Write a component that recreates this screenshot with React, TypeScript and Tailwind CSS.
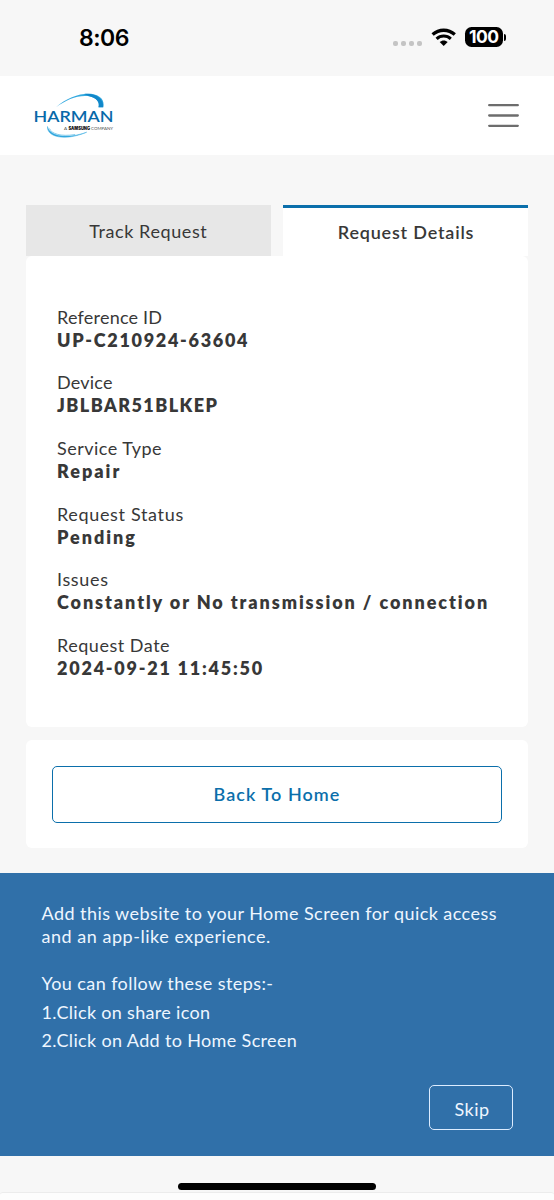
import React from "react";

const details = [
  { label: "Reference ID", value: "UP-C210924-63604", ls: "tracking-[0.22px]", vs: "tracking-[1.7px]" },
  { label: "Device", value: "JBLBAR51BLKEP", ls: "tracking-[0.2px]", vs: "tracking-[1.44px]" },
  { label: "Service Type", value: "Repair", ls: "tracking-[0.48px]", vs: "tracking-[2px]" },
  { label: "Request Status", value: "Pending", ls: "tracking-[0.66px]", vs: "tracking-[1.95px]" },
  { label: "Issues", value: "Constantly or No transmission / connection", ls: "tracking-[0.65px]", vs: "tracking-[1.92px]" },
  { label: "Request Date", value: "2024-09-21 11:45:50", ls: "tracking-[0.52px]", vs: "tracking-[1.77px]" },
];

function StatusBar() {
  return (
    <div className="flex h-[76px] items-start justify-between bg-[#f7f7f7] pl-[79px] pr-[48px] font-['Inter',sans-serif]">
      <span className="mt-[24px] text-[23px] font-semibold leading-[28px] tracking-[-0.5px] text-black">8:06</span>
      <div className="mt-[27px] flex items-start">
        <div className="mt-[14px] flex gap-[3px]">
          <i className="size-[5px] rounded-[2px] bg-[#c4c4c4]" />
          <i className="size-[5px] rounded-[2px] bg-[#c4c4c4]" />
          <i className="size-[5px] rounded-[2px] bg-[#c4c4c4]" />
          <i className="size-[5px] rounded-[2px] bg-[#c4c4c4]" />
        </div>
        <svg className="ml-[9px] mt-[0.5px]" width="26" height="19" viewBox="0 0 26 19" fill="none" stroke="#000">
          <path d="M1.600 6.500C8 .8 17.400 .8 23.800 6.500" strokeWidth="3.300" />
          <path d="M5.600 10.800c4-3.700 10.200-3.700 14.200 0" strokeWidth="3.100" />
          <path d="M8.700 14.100c2.300-2.100 5.700-2.100 8 0L12.700 18.100Z" fill="#000" stroke="none" />
        </svg>
        <div className="ml-[8px] flex items-center">
          <div className="flex h-[20px] w-[37.500px] items-center justify-center rounded-[6.500px] bg-black text-[17.500px] font-bold leading-none tracking-[-0.600px] text-white">
            100
          </div>
          <i className="ml-px h-[7px] w-[2.500px] rounded-r-full bg-black" />
        </div>
      </div>
    </div>
  );
}

function Logo() {
  return (
    <svg width="84" height="50" viewBox="0 0 84 50">
      <path d="M22 16.300C32 6.500 47 1.800 57 2.800C67 4 71 10 69.200 16.300L64.500 16.300C66 11.500 63 7.200 56 5.600C45 3.500 33 8.500 22 16.300Z" fill="#35aae0" />
      <path d="M50 2.900C62 2 70 7.500 69.200 16.300L64.500 16.300C66 11.500 63 7 54 4.800Z" fill="#1187c9" />
      <path d="M13.500 35.500C12.500 46 31 50.500 52.700 41.200C34 47.800 16 46 13.500 35.500Z" fill="#2aa3dc" stroke="#45b0e2" strokeWidth="0.500" />
      <path d="M15.500 37.500C17 42.500 27 46 41 43.500" fill="none" stroke="#6fc3ea" strokeWidth="0.800" />
      <text x="-0.500" y="31.300" textLength="80" lengthAdjust="spacingAndGlyphs" fontFamily="Lato, sans-serif" fontWeight="600" fontSize="16" fill="#0869a9">HARMAN</text>
      <text x="30" y="38.500" fontFamily="Lato, sans-serif" fontSize="4.600" fill="#444">A</text>
      <text x="34.500" y="38.500" textLength="21.500" lengthAdjust="spacingAndGlyphs" fontFamily="Inter, sans-serif" fontWeight="900" fontSize="4.200" fill="#111">SAMSUNG</text>
      <text x="57" y="38.500" textLength="22" lengthAdjust="spacingAndGlyphs" fontFamily="Lato, sans-serif" fontSize="4.500" fill="#555">COMPANY</text>
    </svg>
  );
}

export default function App() {
  return (
    <div className="flex h-[1200px] w-[554px] flex-col overflow-hidden bg-[#f7f7f7] font-['Lato',sans-serif] text-[18px] text-[#383838]">
      <StatusBar />
      <header className="flex h-[79px] items-center justify-between bg-white pl-[34px] pr-[35px]">
        <Logo />
        <button aria-label="Menu">
          <svg width="31" height="25" viewBox="0 0 31 25" stroke="#6d6d6d" strokeWidth="2.300" strokeLinecap="round">
            <path d="M1.200 2.200H29.800M1.200 12.500H29.800M1.200 22.800H29.800" />
          </svg>
        </button>
      </header>

      <main className="h-[718px] px-[26px] pt-[50px]">
        <div className="flex h-[51px] justify-between">
          <button className="h-full w-[244.500px] bg-[#e7e7e7] pt-[2px] tracking-[0.600px]">Track Request</button>
          <button className="h-full w-[245px] border-t-[3px] border-[#0b6fab] bg-white pl-px font-semibold tracking-[0.800px]">Request Details</button>
        </div>
        <section className="flex h-[471px] flex-col gap-[19.700px] rounded-[6px] bg-white pl-[31px] pt-[49.500px]">
          {details.map((d) => (
            <div key={d.label} className="whitespace-nowrap leading-[23px]">
              <div className={d.ls}>{d.label}</div>
              <div className={"font-extrabold " + d.vs}>{d.value}</div>
            </div>
          ))}
        </section>
        <section className="mt-[13px] h-[108px] rounded-[6px] bg-white p-[26px]">
          <button className="h-[56.500px] w-[450px] rounded-[5px] border-[1.500px] border-[#0b6fab] font-semibold tracking-[1.050px] text-[#0b6fab]">
            Back To Home
          </button>
        </section>
      </main>

      <section className="h-[283px] bg-[#3070a9] px-[41.500px] pt-[28.500px] text-[#eef6ff]">
        <p className="whitespace-nowrap leading-[23.300px]">
          <span className="tracking-[0.440px]">Add this website to your Home Screen for quick access</span>
          <br />
          <span className="tracking-[0.530px]">and an app-like experience.</span>
        </p>
        <div className="mt-[21.300px] leading-[28.300px]">
          <p className="tracking-[0.420px]">You can follow these steps:-</p>
          <p className="tracking-[0.320px]">1.Click on share icon</p>
          <p className="tracking-[0.350px]">2.Click on Add to Home Screen</p>
        </div>
        <div className="mt-[31px] flex justify-end">
          <button className="h-[45px] w-[84px] rounded-[5px] border-[1.500px] border-[#dcecff] pl-[3px] pt-[4px] tracking-[0.450px]">Skip</button>
        </div>
      </section>

      <footer className="flex h-[44px] flex-col items-center pt-[27px]">
        <div className="h-[6.500px] w-[198px] rounded-full bg-black" />
        <div className="mt-[2.500px] h-[8px] w-full rounded-t-[3px] border-t border-[#ececec] bg-[#fdfdfd]" />
      </footer>
    </div>
  );
}
